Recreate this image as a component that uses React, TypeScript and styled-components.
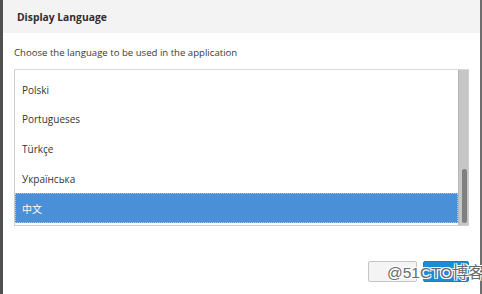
import React from "react";
import styled, { createGlobalStyle } from "styled-components";

const Global = createGlobalStyle`
  html, body { margin: 0; padding: 0; background: #fff; }
  body { font-family: "Open Sans", "Noto Sans", "Noto Sans CJK SC", sans-serif; }
`;

const Page = styled.div`
  position: relative;
  display: flex;
  width: 482px;
  height: 294px;
  overflow: hidden;
`;

const Edge = styled.div<{ $w: number; $c: string }>`
  width: ${(p) => p.$w}px;
  flex: none;
  background: ${(p) => p.$c};
`;

const Dialog = styled.div`
  flex: 1;
  display: flex;
  flex-direction: column;
  background: #fff;
`;

const Header = styled.div`
  height: 33px;
  display: flex;
  align-items: center;
  padding-left: 14px;
  background: #f3f3f3;
  box-sizing: border-box;
`;

const Title = styled.div`
  font-size: 10.3px;
  font-weight: 700;
  color: #2e2e2e;
`;

const Body = styled.div`
  flex: 1;
  display: flex;
  flex-direction: column;
  padding: 13px 11px 0 11px;
`;

const Subtitle = styled.div`
  font-size: 9.6px;
  color: #3a3a3a;
  line-height: 14px;
  margin-bottom: 9px;
`;

const ListBox = styled.div`
  display: flex;
  height: 157px;
  border: 1px solid #cfcfcf;
  border-top-color: #d8d8d8;
  box-sizing: border-box;
`;

const Rows = styled.div`
  flex: 1;
  display: flex;
  flex-direction: column;
  padding-top: 5px;
`;

const Row = styled.div<{ $sel?: boolean }>`
  height: 29.6px;
  display: flex;
  align-items: center;
  padding-left: 7px;
  box-sizing: border-box;
  font-size: 10px;
  color: ${(p) => (p.$sel ? "#fff" : "#333")};
  background: ${(p) => (p.$sel ? "#4a90d9" : "transparent")};
  outline: ${(p) => (p.$sel ? "1px dotted #a9c8ec" : "none")};
  outline-offset: -1px;
`;

const Track = styled.div`
  width: 10px;
  flex: none;
  background: #c6c6c6;
  border-left: 1px solid #b8b8b8;
  box-sizing: border-box;
  display: flex;
  flex-direction: column;
  justify-content: flex-end;
  align-items: center;
  padding: 0 0 2px 1px;
`;

const Thumb = styled.div`
  width: 5px;
  height: 54px;
  border-radius: 3px;
  background: #7f7f7f;
`;

const Footer = styled.div`
  display: flex;
  justify-content: flex-end;
  gap: 6px;
  margin-top: 35px;
`;

const Button = styled.button<{ $primary?: boolean }>`
  height: 21px;
  width: ${(p) => (p.$primary ? 46 : 49)}px;
  padding: 0;
  font-family: inherit;
  font-size: 10px;
  border-radius: 2px;
  border: 1px solid ${(p) => (p.$primary ? "#1a7fc0" : "#c4c4c4")};
  background: ${(p) => (p.$primary ? "#1b8cd6" : "#f4f4f4")};
  color: ${(p) => (p.$primary ? "#fff" : "#333")};
`;

const Watermark = styled.div`
  position: absolute;
  left: 387px;
  top: 262px;
  font-family: "Liberation Sans", "Noto Sans CJK SC", sans-serif;
  font-size: 15.5px;
  line-height: 22px;
  color: #6a6a6a;
  text-shadow: 1px 1px 0 #fff, -1px -1px 0 #fff, 1px -1px 0 #fff, -1px 1px 0 #fff;
  white-space: nowrap;
`;

const langs = ["Polski", "Portugueses", "Türkçe", "Українська", "中文"];

export default function App() {
  return (
    <Page>
      <Global />
      <Edge $w={3} $c="#505050" />
      <Dialog>
        <Header>
          <Title>Display Language</Title>
        </Header>
        <Body>
          <Subtitle>Choose the language to be used in the application</Subtitle>
          <ListBox>
            <Rows>
              {langs.map((l, i) => (
                <Row key={l} $sel={i === langs.length - 1}>
                  {l}
                </Row>
              ))}
            </Rows>
            <Track>
              <Thumb />
            </Track>
          </ListBox>
          <Footer>
            <Button />
            <Button $primary />
          </Footer>
        </Body>
      </Dialog>
      <Edge $w={2} $c="#6e6e6e" />
      <Watermark>@51CTO博客</Watermark>
    </Page>
  );
}
